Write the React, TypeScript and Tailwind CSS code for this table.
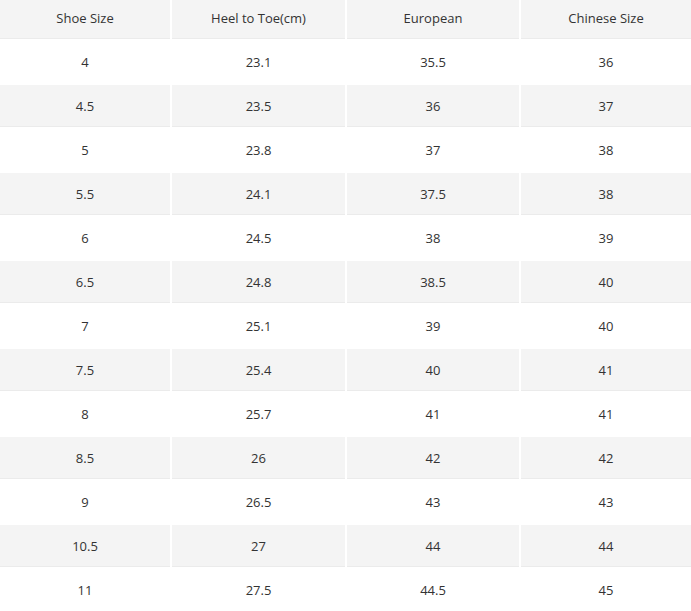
import React from "react";

const header = ["Shoe Size", "Heel to Toe(cm)", "European", "Chinese Size"];
const rows: string[][] = [
  ["4", "23.1", "35.5", "36"],
  ["4.5", "23.5", "36", "37"],
  ["5", "23.8", "37", "38"],
  ["5.5", "24.1", "37.5", "38"],
  ["6", "24.5", "38", "39"],
  ["6.5", "24.8", "38.5", "40"],
  ["7", "25.1", "39", "40"],
  ["7.5", "25.4", "40", "41"],
  ["8", "25.7", "41", "41"],
  ["8.5", "26", "42", "42"],
  ["9", "26.5", "43", "43"],
  ["10.5", "27", "44", "44"],
  ["11", "27.5", "44.5", "45"],
];

export default function App() {
  return (
    <div
      className="w-[691px] h-[611px] bg-white overflow-hidden text-[13px] text-[#333333]"
      style={{ fontFamily: '"Open Sans", "Noto Sans", sans-serif' }}
    >
      <div className="grid grid-cols-[170px_173px_172px_170px] gap-x-[2px] gap-y-[2px]">
        {header.map((h) => (
          <div
            key={h}
            className="h-[39px] flex items-center justify-center pb-[1px] bg-[#f4f4f4] border-b border-[#ebebeb]"
          >
            {h}
          </div>
        ))}
        {rows.map((r, i) =>
          r.map((c, j) => (
            <div
              key={`${i}-${j}`}
              className={
                i % 2 === 1
                  ? "h-[42px] flex items-center justify-center pt-[2px] bg-[#f4f4f4] border-b border-[#ebebeb]"
                  : "h-[42px] flex items-center justify-center pt-[2px] bg-white"
              }
            >
              {c}
            </div>
          ))
        )}
      </div>
    </div>
  );
}
